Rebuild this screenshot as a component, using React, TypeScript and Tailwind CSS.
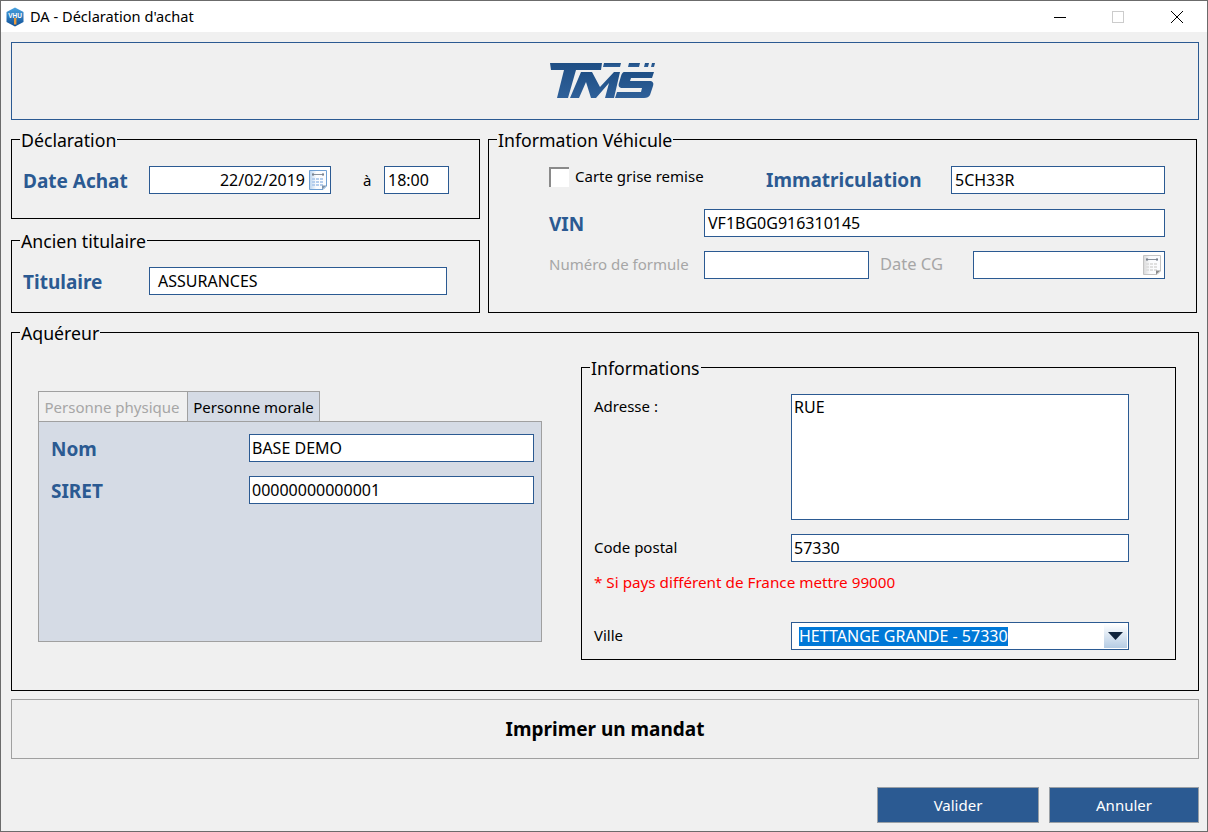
import React from 'react';

const FONT = "font-['Noto_Sans',sans-serif]";

function Section({ title, className, children }: { title: string; className?: string; children?: React.ReactNode }) {
  return (
    <div className={`relative border border-black ${className ?? ''}`}>
      <span className="absolute -top-[12px] left-[8px] bg-[#f0f0f0] px-[1px] text-[17.7px] leading-[24px] text-black whitespace-nowrap">
        {title}
      </span>
      {children}
    </div>
  );
}

function Field({ value, className, children }: { value?: string; className?: string; children?: React.ReactNode }) {
  return (
    <div className={`flex h-[28px] items-center border border-[#2b5a92] bg-white text-[16px] leading-[20px] text-black whitespace-nowrap ${className ?? ''}`}>
      {value}
      {children}
    </div>
  );
}

function Label({ text, className }: { text: string; className?: string }) {
  return <div className={`h-[28px] text-[19px] leading-[30px] font-bold text-[#2b5a92] whitespace-nowrap ${className ?? ''}`}>{text}</div>;
}

function CalendarIcon({ disabled }: { disabled?: boolean }) {
  const edge = disabled ? '#c4c4c4' : '#6fa0d4';
  const cell = disabled ? '#e0e0e0' : '#b4cdec';
  return (
    <svg width="18" height="20" viewBox="0 0 18 20" className="shrink-0">
      <defs>
        <linearGradient id={disabled ? 'calGrey' : 'calBlue'} x1="0" y1="0" x2="1" y2="0">
          <stop offset="0" stopColor={disabled ? '#d8d8d8' : '#b9d3ee'} />
          <stop offset="0.4" stopColor="#fbfcfe" />
        </linearGradient>
      </defs>
      <path d="M0.5 0.5H17.5V16L14 19.5H0.5Z" fill={`url(#${disabled ? 'calGrey' : 'calBlue'})`} stroke={edge} />
      <path d="M3 4.5H15" stroke="#8a929c" />
      <path d="M4 3V6M14 3V6" stroke="#6b7280" />
      {[3, 7, 11].map((x) =>
        [8, 11, 14].map((y) => <rect key={`${x}-${y}`} x={x} y={y} width="3" height="2" fill={cell} />)
      )}
      <path d="M13 19.5L17.5 15.5H13Z" fill={disabled ? '#8c8c8c' : '#7f95ad'} />
    </svg>
  );
}

function AppIcon() {
  return (
    <svg width="20" height="20" viewBox="0 0 20 20">
      <defs>
        <linearGradient id="hexBlue" x1="0" y1="0" x2="0" y2="1">
          <stop offset="0" stopColor="#4aa3e0" />
          <stop offset="1" stopColor="#0f4f96" />
        </linearGradient>
      </defs>
      <path d="M10 0.5L18.5 5V15L10 19.5L1.5 15V5Z" fill="url(#hexBlue)" />
      <text x="10" y="10.5" textAnchor="middle" fontSize="6.5" fontWeight="700" fontFamily="Liberation Sans, sans-serif" fill="#ffffff">VHU</text>
      <rect x="9" y="11" width="2.4" height="6.5" fill="#e89a3c" />
    </svg>
  );
}

function TmsLogo() {
  return (
    <svg width="106" height="37" viewBox="0 0 106 37" className="mr-[4px]">
      <defs>
        <linearGradient id="tmsFill" x1="0" y1="0" x2="0" y2="1">
          <stop offset="0" stopColor="#1f4f85" />
          <stop offset="1" stopColor="#2f6099" />
        </linearGradient>
      </defs>
      <g fill="url(#tmsFill)">
        {/* T */}
        <path d="M0 0H52L51 7H26L18 35H7L14 7H1Z" />
        {/* M */}
        <path d="M20 35L31 9H42L50 24L64 9H70L64 35H55L59 20L46 35H41L36 19L29 35Z" />
        {/* S */}
        <path d="M74 9H104L102 15H81L80 18H99C103 18 104 20 103 23L100 32C99 34 97 35 94 35H65L67 29H91L92 25H73C69 25 68 23 69 20L71 13C72 10 73 9 74 9Z" />
        {/* speed stripes */}
        <path d="M54 0H71L70 4H53Z" />
        <path d="M79 0H90L89 4H78Z" />
        <path d="M95 0H99L98 4H94Z" />
        <path d="M102 0H105L104 4H101Z" />
      </g>
    </svg>
  );
}

export default function App() {
  return (
    <div className={`flex h-[832px] w-[1208px] flex-col overflow-hidden border border-[#6b6b6b] bg-[#f0f0f0] ${FONT}`}>
      {/* title bar */}
      <div className="flex h-[31px] shrink-0 items-center bg-white pl-[4px] text-black">
        <AppIcon />
        <span className="-mt-[2px] ml-[5px] text-[14.6px] leading-[20px]">DA - Déclaration d'achat</span>
        <div className="ml-auto flex items-center">
          <svg width="12" height="12" viewBox="0 0 12 12" className="mr-[46px]">
            <path d="M0 6.5H12" stroke="#000" />
          </svg>
          <div className="mr-[47px] h-[12px] w-[12px] border border-[#cccccc]" />
          <svg width="12" height="12" viewBox="0 0 12 12" className="mr-[24px]">
            <path d="M0 0L12 12M12 0L0 12" stroke="#000" />
          </svg>
        </div>
      </div>

      <div className="flex flex-col pl-[10px] pr-[8px] pt-[10px]">
        {/* logo */}
        <div className="flex h-[78px] items-center justify-center border border-[#2b5a92]">
          <TmsLogo />
        </div>

        <div className="mt-[19px] flex h-[174px] gap-[8px]">
          <div className="flex w-[469px] flex-col">
            <Section title="Déclaration" className="h-[80px]">
              <div className="flex items-center pl-[11px] pt-[26px]">
                <Label text="Date Achat" className="w-[126px]" />
                <Field value="22/02/2019" className="w-[182px] justify-end pr-[3px]">
                  <span className="ml-[4px]"><CalendarIcon /></span>
                </Field>
                <span className="ml-[32px] w-[21px] text-[15px] text-black">à</span>
                <Field value="18:00" className="w-[65px] pl-[3px]" />
              </div>
            </Section>
            <Section title="Ancien titulaire" className="mt-[21px] h-[73px]">
              <div className="flex items-center pl-[11px] pt-[26px]">
                <Label text="Titulaire" className="w-[126px]" />
                <Field value="ASSURANCES" className="w-[298px] pl-[8px]" />
              </div>
            </Section>
          </div>

          <Section title="Information Véhicule" className="h-[174px] w-[709px]">
            <div className="pl-[60px] pt-[26px]">
              <div className="flex items-start">
                <div className="flex w-[217px]">
                  <div className="mt-[1px] h-[20px] w-[20px] border-l-2 border-t-2 border-[#8a8a8a] bg-white" />
                  <span className="ml-[6px] text-[15px] leading-[20px] text-black">Carte grise remise</span>
                </div>
                <Label text="Immatriculation" className="w-[185px] !leading-[28px]" />
                <Field value="5CH33R" className="w-[214px] pl-[3px]" />
              </div>
              <div className="mt-[15px] flex items-center">
                <Label text="VIN" className="w-[155px]" />
                <Field value="VF1BG0G916310145" className="w-[461px] pl-[3px]" />
              </div>
              <div className="mt-[14px] flex items-center text-[15px] text-[#a6a6a6]">
                <span className="-mt-[2px] w-[155px]">Numéro de formule</span>
                <Field className="w-[165px]" />
                <span className="-mt-[2px] ml-[11px] w-[93px] text-[16.5px]">Date CG</span>
                <Field className="w-[192px] justify-end pr-[3px]">
                  <CalendarIcon disabled />
                </Field>
              </div>
            </div>
          </Section>
        </div>

        <Section title="Aquéreur" className="mt-[19px] h-[359px]">
          <div className="flex items-start">
            {/* tabs */}
            <div className="ml-[26px] mt-[58px] w-[504px]">
              <div className="flex h-[30px] text-[15px] leading-[20px]">
                <div className="flex w-[149px] items-center justify-center border-l border-t border-[#a0a0a0] pr-[2px] text-[#a6a6a6]">Personne physique</div>
                <div className="flex w-[133px] items-center justify-center border-x border-t border-[#a0a0a0] bg-[#d5dbe5] text-black">Personne morale</div>
              </div>
              <div className="h-[221px] border border-[#a0a0a0] bg-[#d5dbe5] pl-[12px] pt-[12px]">
                <div className="flex items-center">
                  <Label text="Nom" className="w-[198px]" />
                  <Field value="BASE DEMO" className="w-[285px] pl-[2px]" />
                </div>
                <div className="mt-[14px] flex items-center">
                  <Label text="SIRET" className="w-[198px]" />
                  <Field value="00000000000001" className="w-[285px] pl-[2px]" />
                </div>
              </div>
            </div>

            <Section title="Informations" className="ml-[39px] mt-[34px] h-[293px] w-[595px]">
              <div className="pl-[12px] pt-[26px] text-[15px] leading-[20px] text-black">
                <div className="flex items-start">
                  <span className="mt-[2px] w-[197px]">Adresse :</span>
                  <Field className="!h-[126px] w-[338px] !items-start pl-[2px] pt-[2px]" value="RUE" />
                </div>
                <div className="mt-[14px] flex items-center">
                  <span className="-mt-[3px] w-[197px]">Code postal</span>
                  <Field value="57330" className="w-[338px] pl-[2px]" />
                </div>
                <div className="mt-[10px] h-[21px] text-[15.25px] text-[#ff0000]">* Si pays différent de France mettre 99000</div>
                <div className="mt-[29px] flex items-center">
                  <span className="-mt-[2px] w-[197px]">Ville</span>
                  <Field className="w-[338px] pl-[7px]">
                    <span className="bg-[#0078d7] leading-[19px] text-white">HETTANGE GRANDE - 57330</span>
                    <div className="ml-auto mr-[1px] flex h-[24px] w-[23px] items-center justify-center bg-gradient-to-b from-white to-[#b5cce4]">
                      <svg width="15" height="8" viewBox="0 0 15 8">
                        <path d="M0 0H15L7.5 8Z" fill="#10243c" />
                      </svg>
                    </div>
                  </Field>
                </div>
              </div>
            </Section>
          </div>
        </Section>

        <div className="mt-[8px] flex h-[60px] items-center justify-center border border-[#a0a0a0] text-[19px] font-bold text-black">
          Imprimer un mandat
        </div>

        <div className="mt-[28px] flex justify-end gap-[10px]">
          <button className="h-[36px] w-[162px] border border-[#9aa0a6] bg-[#2b5a92] text-[15px] text-white">Valider</button>
          <button className="h-[36px] w-[150px] border border-[#9aa0a6] bg-[#2b5a92] text-[15px] text-white">Annuler</button>
        </div>
      </div>
    </div>
  );
}
